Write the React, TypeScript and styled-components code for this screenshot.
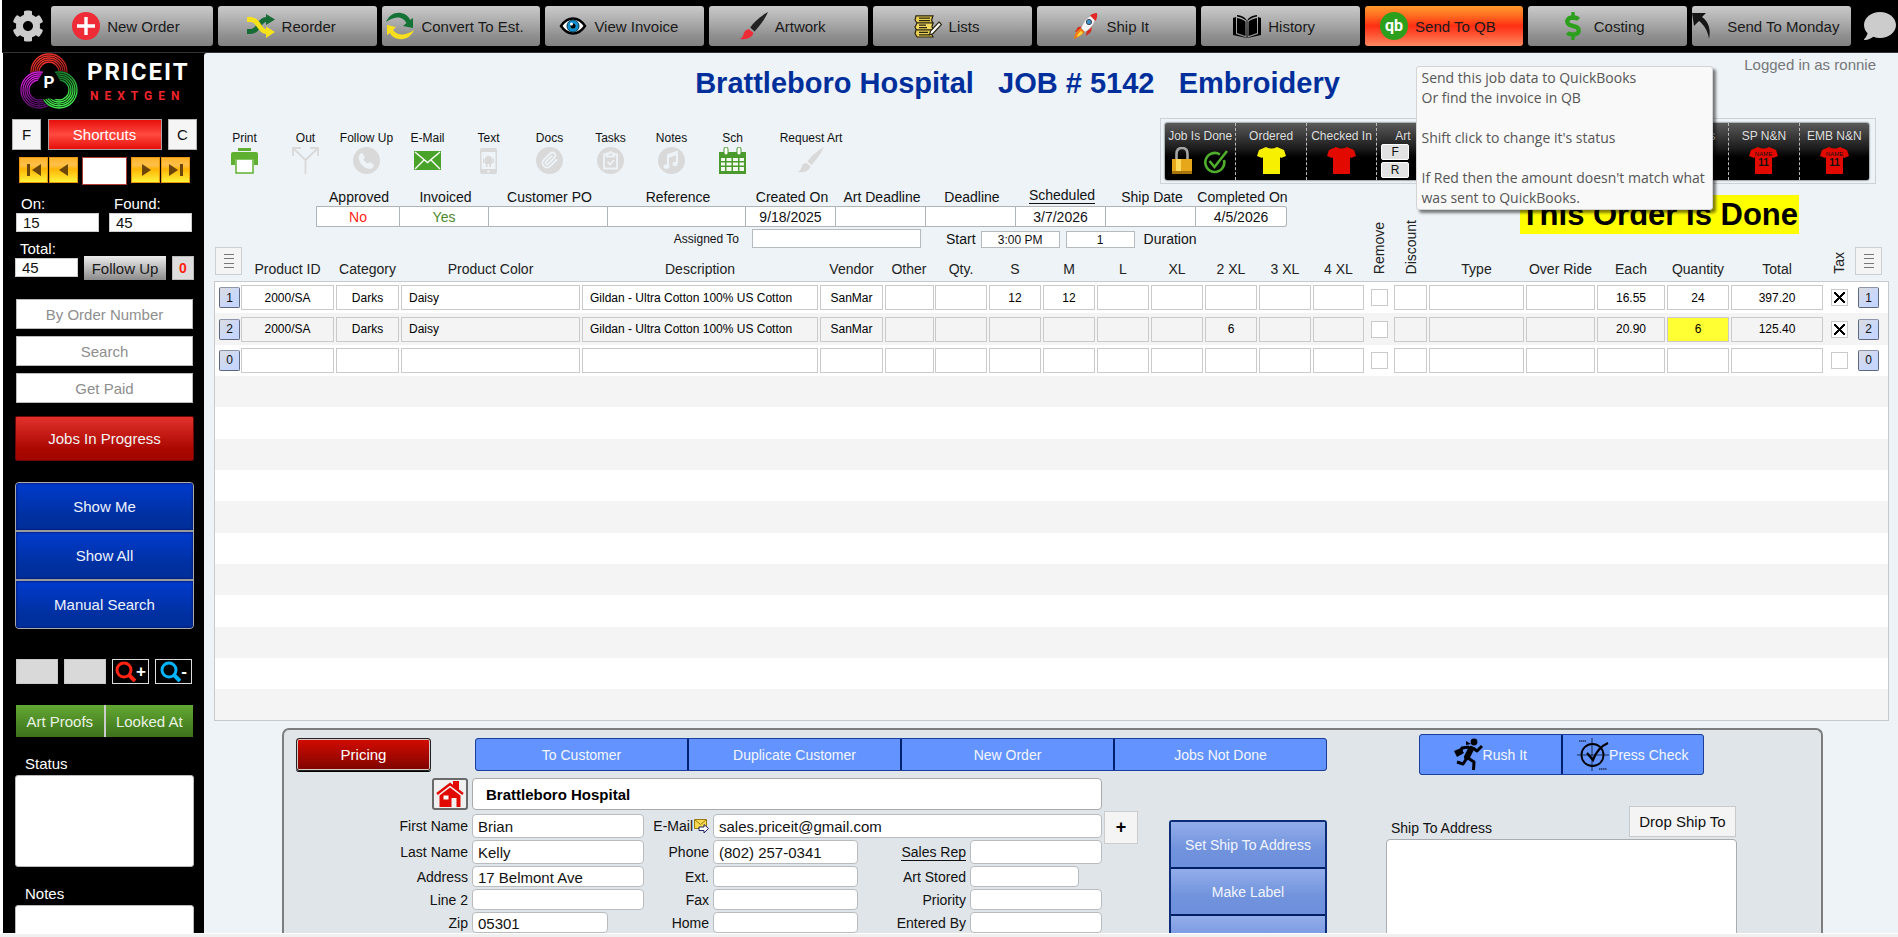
import React, { useId } from "react";
import styled, { createGlobalStyle, css } from "styled-components";
import { FaCog, FaComment, FaDollarSign } from "react-icons/fa";

const Global = createGlobalStyle`
  * { box-sizing: border-box; }
  body { margin: 0; background: #f0f0f0; font-family: "Liberation Sans", Arial, sans-serif; font-size: 14px; color: #111; }
  button, input, textarea { font-family: inherit; margin: 0; }
  button { cursor: pointer; padding: 0; }
  svg { display: block; flex: none; }
`;

/* ---------- shell ---------- */

const Shell = styled.div`
  height: 100vh;
  display: grid;
  grid-template-rows: 53px minmax(0, 1fr) 4px;
  background: #fff;
`;

const Footer = styled.footer`
  border-top: 1px solid #fff;
  background: #f0f0f0;
`;

const TopBar = styled.nav`
  margin-left: 2px;
  background: #000;
  border-bottom: 1px solid #333;
  padding: 6px 0 6px 1px;
  display: flex;
  gap: 5px;
`;

const IconButton = styled.button<{ $width: number }>`
  width: ${(p) => p.$width}px;
  padding-left: 7px;
  border: 0;
  background: none;
  color: #ccc;
  display: flex;
  align-items: center;
  justify-content: center;
`;

const TopSlot = styled.div`
  position: relative;
  flex: 1 1 0;
  min-width: 0;
  display: flex;
  &:nth-child(2) { flex-basis: 3px; }
`;

const TopButton = styled.button<{ $alert?: boolean }>`
  flex: 1;
  height: 40px;
  border: 0;
  border-radius: 3px;
  padding-right: 12px;
  display: flex;
  align-items: center;
  justify-content: center;
  gap: 7px;
  font-size: 15px;
  color: #1a1a1a;
  white-space: nowrap;
  background: ${(p) =>
    p.$alert
      ? "linear-gradient(#ff9a2e 0%, #ff6a20 25%, #ff2e14 50%, #ff5a38 75%, #ff8a62 100%)"
      : "linear-gradient(#cacaca 0%, #a8a8a8 45%, #8f8f8f 75%, #808080 100%)"};
`;

const Tooltip = styled.div`
  position: absolute;
  left: 51px;
  top: 60px;
  z-index: 10;
  width: 297px;
  padding: 1px 5px;
  border: 1px solid #d4d4d4;
  border-radius: 3px;
  background: #f9f9f9;
  box-shadow: 3px 3px 3px rgba(0, 0, 0, 0.5);
  font-family: "Open Sans", "Noto Sans", sans-serif;
  font-size: 14px;
  line-height: 20px;
  color: #555;
  white-space: pre;
`;

const TooltipBody = styled.p`
  margin: 0;
`;

const Body = styled.div`
  margin-left: 3px;
  min-height: 0;
  overflow: hidden;
  background: #000;
  display: grid;
  grid-template-columns: 201px minmax(0, 1fr);
`;

/* ---------- sidebar ---------- */

const Sidebar = styled.aside`
  padding: 0 10px 0 12px;
  color: #fff;
  display: flex;
  flex-direction: column;
`;

const Logo = styled.div`
  height: 56px;
  display: flex;
  align-items: center;
  gap: 8px;
  padding-left: 4px;
`;

const LogoWords = styled.div`
  font-family: Roboto, sans-serif;
  font-weight: 700;
  text-align: left;
`;

const LogoName = styled.div`
  font-size: 24px;
  line-height: 26px;
  letter-spacing: 2px;
`;

const LogoTag = styled.div`
  font-size: 12px;
  line-height: 16px;
  letter-spacing: 6px;
  padding-left: 3px;
  margin-top: 3px;
  color: #f0242c;
`;

const Row = styled.div<{ $top: number; $gap?: number; $left?: number; $right?: number }>`
  display: flex;
  margin-top: ${(p) => p.$top}px;
  gap: ${(p) => p.$gap ?? 0}px;
  padding-left: ${(p) => p.$left ?? 0}px;
  padding-right: ${(p) => p.$right ?? 0}px;
`;

const ShortcutRow = styled.div`
  margin: 10px -3px 0;
  display: flex;
  justify-content: space-between;
`;

const LetterButton = styled.button`
  width: 29px;
  height: 31px;
  border: 1px solid #b5b5b5;
  background: #f5f5f5;
  font-size: 15px;
  color: #111;
`;

const ShortcutsButton = styled.button`
  width: 114px;
  height: 31px;
  border: 1px solid #a9a2a2;
  background: linear-gradient(#e60f0b, #ff4a40 50%, #e60f0b);
  color: #fff;
  font-size: 15px;
`;

const NavButton = styled.button`
  width: 29px;
  height: 26px;
  border: 1px solid #e8960c;
  background: linear-gradient(#ffb52c 0%, #ffc04a 30%, #ffb404 46%, #fff23a 100%);
  color: #6b4608;
  display: flex;
  align-items: center;
  justify-content: center;
`;

const NavInput = styled.input`
  width: 45px;
  height: 28px;
  margin: 0 3px;
  border: 1px solid #b43a34;
  background: #fff;
`;

const Stat = styled.label<{ $width: number; $bottom?: number }>`
  width: ${(p) => p.$width}px;
  padding-bottom: ${(p) => p.$bottom ?? 0}px;
  display: flex;
  flex-direction: column;
  gap: 1px;
  font-size: 15px;
  line-height: 16px;
`;

const StatName = styled.span`
  padding-left: 5px;
`;

const StatInput = styled.input`
  width: 100%;
  height: 19px;
  border: 1px solid #ccc;
  padding: 0 6px;
  font-size: 15px;
  color: #111;
`;

const FollowButton = styled.button`
  width: 82px;
  height: 24px;
  align-self: flex-end;
  border: 0;
  background: linear-gradient(#ececec, #8b8b8b);
  font-size: 15px;
  color: #1a1a1a;
`;

const CountButton = styled.button`
  width: 22px;
  height: 24px;
  align-self: flex-end;
  border: 1px solid #bbb;
  background: #ddd;
  color: #ff2414;
  font-weight: 700;
  font-size: 14px;
`;

const Finder = styled.div`
  margin: 19px 1px 0;
  display: flex;
  flex-direction: column;
  gap: 7px;
`;

const FinderInput = styled.input`
  height: 30px;
  border: 1px solid #bbb;
  background: #fff;
  text-align: center;
  font-size: 15px;
  &::placeholder { color: #8e8e8e; opacity: 1; }
`;

const JobsButton = styled.button`
  margin-top: 13px;
  height: 45px;
  border: 1px solid #6d0806;
  border-radius: 2px;
  background: linear-gradient(#e2312b, #aa0700 75%, #a20500);
  color: #f2f2f2;
  font-size: 15px;
`;

const BlueStack = styled.div`
  margin-top: 21px;
  border: 1px solid #aaa;
  border-radius: 4px;
  overflow: hidden;
  display: flex;
  flex-direction: column;
  gap: 2px;
  background: #999;
`;

const BlueStackButton = styled.button`
  height: 47px;
  border: 0;
  background: linear-gradient(#003bce, #0030a0 70%, #002f9a);
  box-shadow: inset 0 0 2px 1px rgba(0, 20, 110, 0.6);
  color: #eef2ff;
  font-size: 15px;
`;

const Swatch = styled.button`
  width: 42px;
  height: 25px;
  border: 1px solid #c9c9c9;
  background: #d9d9d9;
`;

const ZoomButton = styled.button`
  width: 37px;
  height: 25px;
  border: 1px solid #ddd;
  background: #000;
  color: #fff;
  font-weight: 700;
  font-size: 17px;
  line-height: 20px;
  display: flex;
  align-items: center;
  justify-content: center;
`;

const GreenPair = styled.div`
  margin: 21px 1px 0;
  display: grid;
  grid-template-columns: 1fr 1fr;
  gap: 2px;
  background: #ccc;
`;

const GreenButton = styled.button`
  height: 32px;
  border: 0;
  background: linear-gradient(#62a832, #3d711c);
  color: #e9f2e2;
  font-size: 15px;
`;

const NoteBlock = styled.label`
  margin-top: 19px;
  display: flex;
  flex-direction: column;
  gap: 3px;
  font-size: 15px;
  line-height: 16px;
`;

const NoteName = styled.span`
  padding-left: 10px;
`;

const NoteArea = styled.textarea`
  height: 92px;
  border: 1px solid #bbb;
  border-radius: 3px;
  background: #fff;
  resize: none;
`;

/* ---------- main ---------- */

const Main = styled.main`
  min-width: 0;
  background: #edf3f7;
  border-top-left-radius: 3px;
  padding: 0 9px 0 10px;
  display: flex;
  flex-direction: column;
`;

const TitleRow = styled.header`
  height: 65px;
  flex: none;
  display: grid;
  grid-template-columns: 1fr auto 1fr;
`;

const Title = styled.h1`
  grid-column: 2;
  margin: 13px 68px 0 0;
  font-size: 29px;
  line-height: 34px;
  font-weight: 700;
  color: #002f9c;
  white-space: pre;
`;

const LoggedIn = styled.div`
  justify-self: end;
  margin: 3px 13px 0 0;
  font-size: 15px;
  line-height: 18px;
  color: #777;
`;

const ToolRow = styled.div`
  flex: none;
  display: flex;
  justify-content: space-between;
`;

const Tools = styled.div`
  padding-top: 12px;
  display: flex;
  align-items: flex-start;
`;

const Tool = styled.button<{ $width?: number }>`
  width: ${(p) => p.$width ?? 61}px;
  border: 0;
  background: none;
  display: flex;
  flex-direction: column;
  align-items: center;
  gap: 1px;
  font-size: 12px;
  line-height: 16px;
  color: #111;
  white-space: nowrap;
`;

const Band = styled.div`
  width: 716px;
  margin-right: 13px;
  padding: 4px 6px 3px 4px;
  border: 1px solid #cdd2d6;
  display: flex;
`;

const BandInner = styled.div`
  flex: 1;
  height: 57px;
  border-radius: 2px;
  background: linear-gradient(#5a5a5a, #1b1b1b 45%, #000 60%);
  box-shadow: 0 0 2px #000;
  display: grid;
  grid-template-columns: repeat(10, 1fr);
`;

const BandCell = styled.div<{ $start?: boolean }>`
  padding: 5px 0 0 ${(p) => (p.$start ? 4 : 0)}px;
  display: flex;
  flex-direction: column;
  align-items: ${(p) => (p.$start ? "flex-start" : "center")};
  gap: ${(p) => (p.$start ? 0 : 3)}px;
  font-size: 12px;
  line-height: 16px;
  color: #ddd;
  white-space: nowrap;
  & + & { border-left: 1px dashed #bbb; }
  & > span { padding-left: ${(p) => (p.$start ? 14 : 0)}px; }
`;

const BandIcons = styled.div`
  display: flex;
  gap: 12px;
`;

const SideButtons = styled.div`
  display: flex;
  flex-direction: column;
  gap: 2px;
`;

const SideButton = styled.button`
  width: 28px;
  height: 16px;
  border: 1px solid #fff;
  border-radius: 2px;
  background: #e2e2e2;
  font-size: 12px;
  line-height: 14px;
  color: #111;
`;

const InfoRow = styled.div`
  flex: none;
  height: 63px;
  padding-top: 4px;
  display: flex;
  justify-content: space-between;
  align-items: flex-start;
`;

const InfoFields = styled.div`
  margin-left: 102px;
  display: grid;
  grid-template-columns: 84px 89px 119px 138px repeat(5, 90px) 91px;
`;

const InfoField = styled.label`
  display: flex;
  flex-direction: column;
  align-items: center;
  font-size: 14px;
  line-height: 18px;
  white-space: nowrap;
`;

const InfoName = styled.span<{ $link?: boolean }>`
  margin-left: 2px;
  ${(p) => p.$link && css`line-height: 15px; border-bottom: 1px solid #111; margin-bottom: 2px;`}
`;

const InfoInput = styled.input<{ $color?: string; $first?: boolean; $last?: boolean }>`
  width: 100%;
  height: 21px;
  border: 1px solid #aeb4b8;
  border-left-width: ${(p) => (p.$first ? 1 : 0)}px;
  border-radius: ${(p) => (p.$last ? "0 3px 3px 0" : "0")};
  background: #fff;
  text-align: center;
  font-size: 14px;
  color: ${(p) => p.$color ?? "#111"};
`;

const Assign = styled.div`
  margin-top: 2px;
  display: flex;
  align-items: flex-end;
  line-height: 18px;
`;

const AssignName = styled.label<{ $width?: number; $small?: boolean; $left?: number; $right?: number }>`
  width: ${(p) => (p.$width ? `${p.$width}px` : "auto")};
  margin-left: ${(p) => p.$left ?? 0}px;
  margin-right: ${(p) => p.$right ?? 0}px;
  text-align: right;
  font-size: ${(p) => (p.$small ? 12 : 14)}px;
`;

const AssignInput = styled.input<{ $width: number; $height: number; $right?: number }>`
  width: ${(p) => p.$width}px;
  height: ${(p) => p.$height}px;
  margin-right: ${(p) => p.$right ?? 0}px;
  border: 1px solid #b4babe;
  background: #fff;
  text-align: center;
  font-size: 12px;
  color: #111;
`;

const Done = styled.strong`
  margin: 7px 90px 0 0;
  padding: 0 1px;
  background: #ff0;
  font-size: 31px;
  line-height: 39px;
  color: #000;
  white-space: nowrap;
`;

/* ---------- order lines ---------- */

const Lines = styled.table`
  flex: none;
  width: 100%;
  height: 474px;
  table-layout: fixed;
  border-collapse: separate;
  border-spacing: 0;
`;

const HeadCell = styled.th<{ $bottom?: number }>`
  height: 34px;
  padding: 0 0 ${(p) => p.$bottom ?? 3}px;
  border-bottom: 1px solid #c6cacd;
  vertical-align: bottom;
  font-size: 14px;
  line-height: 18px;
  font-weight: 400;
  color: #222;
  white-space: nowrap;
`;

const MenuButton = styled.button`
  width: 27px;
  height: 28px;
  margin-left: 1px;
  border: 1px solid #ccd0d2;
  background: #f4f4f4;
  display: flex;
  align-items: center;
  justify-content: center;
`;

const SideHead = styled.div`
  height: 20px;
  display: flex;
  justify-content: center;
  align-items: flex-end;
`;

const SideText = styled.span`
  writing-mode: vertical-rl;
  transform: rotate(180deg);
  line-height: 16px;
`;

const LineRow = styled.tr`
  height: 31px;
  background: #fff;
  &:nth-child(even) { background: #f4f4f4; }
  & > td:first-child { border-left: 1px solid #c6cacd; }
  & > td:last-child { border-right: 1px solid #c6cacd; }
  &:last-child > td { border-bottom: 1px solid #c6cacd; }
`;

const Cell = styled.td<{ $flush?: boolean }>`
  padding: 0 ${(p) => (p.$flush ? 0 : 1)}px 0 1px;
  vertical-align: middle;
  text-align: center;
`;

const CellInput = styled.input<{ $left?: boolean; $mark?: boolean }>`
  display: block;
  width: 100%;
  height: 25px;
  border: 1px solid #cacaca;
  padding: 0 ${(p) => (p.$left ? 7 : 0)}px;
  background: ${(p) => (p.$mark ? "#ffff33" : "transparent")};
  text-align: ${(p) => (p.$left ? "left" : "center")};
  font-size: 12px;
  color: #000;
`;

const LineButton = styled.button`
  display: block;
  width: 21px;
  height: 21px;
  margin-left: 3px;
  border: 1px solid #5d677f;
  border-top-color: #8d96aa;
  border-radius: 2px;
  background: linear-gradient(135deg, #dcdde0, #c9d7fa 60%, #c4d4fc);
  font-size: 12px;
  color: #111;
`;

const Tick = styled.input`
  appearance: none;
  display: block;
  width: 17px;
  height: 17px;
  margin: 0 auto;
  border: 1px solid #cacaca;
  background: #fff;
  &:checked {
    background:
      linear-gradient(45deg, transparent 42%, #000 43%, #000 57%, transparent 58%) center / 11px 11px no-repeat,
      linear-gradient(-45deg, transparent 42%, #000 43%, #000 57%, transparent 58%) center / 11px 11px no-repeat,
      #fff;
  }
`;

/* ---------- customer panel ---------- */

const Panel = styled.section`
  flex: 1 0 auto;
  margin: 7px 66px 0 68px;
  padding-top: 4px;
  border: 2px solid #7b7d7e;
  border-bottom: 0;
  border-radius: 7px 7px 0 0;
  background: #e0e5e9;
`;

const Actions = styled.div`
  display: flex;
  align-items: center;
  padding: 0 117px 0 12px;
`;

const PricingButton = styled.button`
  width: 135px;
  height: 33px;
  border: 1px solid #222;
  border-radius: 3px;
  background: linear-gradient(#d40b00, #7d0500);
  box-shadow: inset 0 0 0 1px #d8c9c7, 0 1px 0 #000;
  color: #fff;
  font-size: 15px;
`;

const Segment = styled.div<{ $left: number; $width?: number }>`
  flex: ${(p) => (p.$width ? `0 0 ${p.$width}px` : "1 1 0")};
  margin-left: ${(p) => p.$left}px;
  border: 1px solid #1c3f9c;
  border-radius: 3px;
  background: #00226e;
  overflow: hidden;
  display: flex;
  gap: 2px;
`;

const SegmentButton = styled.button<{ $height: number }>`
  flex: 1 1 0;
  height: ${(p) => p.$height}px;
  border: 0;
  background: #6293ff;
  color: #f4f7ff;
  font-size: 14px;
  display: flex;
  align-items: center;
  justify-content: center;
  white-space: nowrap;
`;

const Details = styled.div`
  padding-top: 3px;
  display: flex;
  align-items: flex-start;
`;

const FormColumn = styled.form`
  width: 818px;
  flex: none;
`;

const CompanyRow = styled.div`
  margin-bottom: 4px;
  padding-left: 148px;
  display: flex;
  gap: 4px;
`;

const HomeButton = styled.button`
  width: 36px;
  height: 32px;
  border: 2px solid #6a6a6a;
  border-radius: 3px;
  background: #f0f0f0;
  display: flex;
  align-items: center;
  justify-content: center;
`;

const CompanyInput = styled.input`
  flex: 1;
  min-width: 0;
  height: 32px;
  border: 1px solid #aaa;
  border-radius: 4px;
  padding: 0 13px;
  font-size: 15px;
  font-weight: 700;
  color: #000;
`;

const FormGrid = styled.div`
  display: grid;
  grid-template-columns: 184px 172px 61px 145px 104px 132px;
  grid-template-rows: 24px 24px 21px 21px 21px;
  gap: 2px 4px;
  align-items: stretch;
`;

const FormLabel = styled.label<{ $link?: boolean }>`
  display: flex;
  align-items: center;
  justify-content: flex-end;
  gap: 1px;
  font-size: 14px;
  line-height: 16px;
  white-space: nowrap;
  span { border-bottom: ${(p) => (p.$link ? "1px solid #111" : "0")}; }
`;

const FormInput = styled.input<{ $width?: number; $span?: number }>`
  grid-column: span ${(p) => p.$span ?? 1};
  width: ${(p) => (p.$width ? `${p.$width}px` : "100%")};
  min-width: 0;
  border: 1px solid #b9bcbe;
  border-radius: 4px;
  padding: 1px 5px 0;
  font-size: 15px;
  color: #111;
`;

const PlusButton = styled.button`
  width: 34px;
  height: 33px;
  margin: 33px 0 0 2px;
  border: 1px solid #ccc;
  background: #f4f4f4;
  font-size: 18px;
  font-weight: 700;
  color: #000;
`;

const ShipButtons = styled.div`
  flex: 0 0 158px;
  margin: 42px 0 0 31px;
  border: 2px solid #0d2c78;
  border-radius: 3px;
  background: #001f66;
  display: flex;
  flex-direction: column;
  gap: 2px;
`;

const ShipButton = styled.button`
  height: 45px;
  border: 0;
  background: linear-gradient(#93adea, #7193dd 60%, #6e90dc);
  color: #f1f5ff;
  font-size: 14px;
`;

const ShipTo = styled.div`
  flex: 0 0 351px;
  margin: 28px 0 0 59px;
`;

const ShipToHead = styled.div`
  height: 33px;
  padding: 0 1px 0 5px;
  display: flex;
  justify-content: space-between;
  align-items: flex-start;
`;

const ShipToName = styled.label`
  margin-top: 14px;
  font-size: 14px;
  line-height: 16px;
`;

const DropShip = styled.button`
  width: 107px;
  height: 31px;
  border: 1px solid #c9c9c9;
  background: #f4f4f4;
  font-size: 15px;
  color: #111;
`;

const ShipArea = styled.textarea`
  display: block;
  width: 100%;
  height: 130px;
  border: 1px solid #a9adb0;
  border-radius: 4px;
  background: #fff;
  resize: none;
`;

/* ---------- drawings ---------- */

const Emblem = () => {
  const radii = [18, 16, 14, 12, 10];
  const lobes = [
    { x: 29, y: 19, from: "#ff3a32", to: "#7a1010" },
    { x: 19, y: 37, from: "#e022e4", to: "#5a0f6c" },
    { x: 39, y: 37, from: "#12702a", to: "#46f050" },
  ];
  return (
    <svg width="60" height="56" viewBox="0 0 58 56" fill="none">
      <defs>
        {lobes.map((l, i) => (
          <linearGradient key={i} id={`lobe${i}`} x1="0" y1="0" x2="0.3" y2="1">
            <stop offset="0" stopColor={l.from} />
            <stop offset="1" stopColor={l.to} />
          </linearGradient>
        ))}
      </defs>
      {lobes.map((l, i) => (
        <g key={i} stroke={`url(#lobe${i})`} strokeWidth="1.300">
          <circle cx={l.x} cy={l.y} r="19" fill="#000" stroke="none" />
          {radii.map((r) => <circle key={r} cx={l.x} cy={l.y} r={r} />)}
        </g>
      ))}
      <path d="M29 15L43 38Q36 46 29 42Q22 46 15 38z" fill="#000" stroke="#000" strokeWidth="6" strokeLinejoin="round" />
      <text x="29" y="35" textAnchor="middle" fill="#fff" fontFamily="Roboto" fontWeight="700" fontSize="17">P</text>
    </svg>
  );
};

const PlusDisc = () => (
  <svg width="28" height="28" viewBox="0 0 28 28">
    <circle cx="14" cy="14" r="14" fill="#ee2b36" />
    <path d="M14 5v18M5 14h18" stroke="#fff" strokeWidth="3.4" />
  </svg>
);

const ShuffleIcon = () => (
  <svg width="28" height="24" viewBox="0 0 28 24" fill="none">
    <path d="M0 17.500h4c8 0 8-12 15-12h2" stroke="#176b35" strokeWidth="5" />
    <path d="M19 0l9 5.500l-9 5.500z" fill="#176b35" />
    <path d="M0 5.500h4c8 0 8 12 15 12h2" stroke="#f5e11c" strokeWidth="5" />
    <path d="M19 12.500l9 5.500l-9 6z" fill="#f5e11c" />
  </svg>
);

const ConvertIcon = () => (
  <svg width="28" height="28" viewBox="0 0 28 28">
    <path d="M0 10C3 3 9 0 15 1c5 .8 8 4 9 7l3-2l0 10l-10-2l3.500-3C19 8 15 5 11 5.500C6 6 3 8 0 10z" fill="#137337" />
    <path d="M28 18c-3 7-9 10-15 9c-5-.8-8-3-9-6l-3 2V13l9 2l-3 3c2 3 6 5 10 4.500c5-.500 8-2.500 11-4.500z" fill="#f7df1d" />
  </svg>
);

const EyeIcon = () => (
  <svg width="28" height="20" viewBox="0 0 28 20">
    <path d="M2 10C6 4 10 2.500 14 2.500S22 4 26 10C22 16 18 17.500 14 17.500S6 16 2 10z" fill="#fff" stroke="#000" strokeWidth="2.400" />
    <circle cx="14" cy="10" r="6" fill="#1590cf" stroke="#063850" />
    <circle cx="14" cy="10" r="2.500" fill="#000" />
    <circle cx="12.500" cy="8" r="1.500" fill="#fff" />
  </svg>
);

const BrushIcon = ({ handle, bristle, size = 26 }: { handle: string; bristle: string; size?: number }) => (
  <svg width={size} height={size} viewBox="0 0 26 26">
    <path d="M26 0C19 4 13 9 9.500 14.500l4 3.500C18 13 23 7 26 0z" fill={handle} />
    <path d="M8.500 16l4 3.500C11 24 6 26 0 25c2.500-1.500 3-3 3.500-5c.600-2.500 2.500-4 5-4z" fill={bristle} />
  </svg>
);

const ListsIcon = () => (
  <svg width="28" height="23" viewBox="0 0 28 23" stroke="#2a2510" strokeWidth="1.200">
    <path d="M2 .800h17l-1.500 4.500L19 8H3L1 5z" fill="#e8cf52" />
    <path d="M3 8h16l-1 3.500l1 3.500H2.500L1 12z" fill="#efd95f" />
    <path d="M2 15h17l-1.500 4l1.500 3H3l-2-3.500z" fill="#e8cf52" />
    <path d="M5 3.200h11M5 5.600h11M5 10.200h7M5 12.600h8M5 17.400h9M5 19.800h10" />
    <path d="M25 7l2.500 2.500l-8.500 9l-3.500 1.500l1-4z" fill="#fff" />
  </svg>
);

const RocketIcon = () => (
  <svg width="28" height="26" viewBox="0 0 28 26">
    <path d="M13 13l-7 1l-3 5l6-1zM15 16l-1 7l5-4l1-6z" fill="#d42c22" />
    <path d="M9 15C5 17 2 22 2 26c4-2 9-4 11-8z" fill="#f47b14" />
    <path d="M9 18c-2 1-4 4-4 6c2-1 4-2 6-4z" fill="#ffd83b" />
    <path d="M24 1c-7 1-12 6-15 14l4 4C20 15 24 9 24 1z" fill="#f4f4f4" stroke="#999" strokeWidth=".5" />
    <path d="M25 0c-3 .200-5 1-7 2.500l5.500 5.500C25 5.500 25.500 3 25 0z" fill="#e32626" />
    <circle cx="17" cy="9" r="2.600" fill="#3a93c8" stroke="#445" />
  </svg>
);

const BookIcon = () => (
  <svg width="28" height="24" viewBox="0 0 28 24">
    <path d="M0 4l3-1v17l10 3.500V6.500C10 4 7 3 4 2.500V1c4 .500 8 2 9.500 5v18L0 21z" fill="#000" />
    <path d="M28 4l-3-1v17l-10 3.500V6.500C18 4 21 3 24 2.500V1c-4 .500-8 2-9.500 5v18L28 21z" fill="#000" />
    <path d="M4 4c3 .500 6 1.500 8.500 3.500v14.500L4 19zM24 4c-3 .500-6 1.500-8.500 3.500v14.500L24 19z" fill="#000" />
  </svg>
);

const QbIcon = () => (
  <svg width="28" height="28" viewBox="0 0 28 28">
    <circle cx="14" cy="14" r="14" fill="#2ca01c" />
    <text x="14" y="19" textAnchor="middle" fill="#fff" fontFamily="Roboto" fontWeight="700" fontSize="16">qb</text>
  </svg>
);

const DollarIcon = styled(FaDollarSign)`
  width: 28px;
  height: 28px;
  color: #2ca01c;
`;

const BackArrow = () => (
  <svg width="28" height="28" viewBox="0 0 28 28">
    <path d="M0 1l14 0l-4 4c7 5 9 13 7 22C16 19 12 13 7 9l-5 5z" fill="#151515" />
  </svg>
);

const NavGlyph = ({ back, end }: { back?: boolean; end?: boolean }) => (
  <svg width="16" height="14" viewBox="0 0 16 14" fill="currentColor">
    <g transform={back ? "rotate(180 8 7)" : undefined}>
      <path d={end ? "M1 1l9 6l-9 6zM12 1h3v12h-3z" : "M4 1l9 6l-9 6z"} />
    </g>
  </svg>
);

const Loupe = ({ color }: { color: string }) => (
  <svg width="21" height="21" viewBox="0 0 21 21" fill="none" stroke={color}>
    <circle cx="9" cy="9" r="7" strokeWidth="3" />
    <path d="M14 14l6 6" strokeWidth="4" />
  </svg>
);

const GREY = "#d9d9d9";
const PAPER = "#edf3f7";

const toolIcons: Record<string, React.ReactNode> = {
  Print: (
    <svg width="27" height="27" viewBox="0 0 27 27">
      <path d="M7 1h13v3H7z" fill="#5fb030" />
      <path d="M2 5h23q2 0 2 2v11h-4v-6H4v6H0V7q0-2 2-2z" fill="#5fb030" />
      <path d="M5 12h17v14H5z" fill="#fff" stroke="#5fb030" strokeWidth="1.500" />
    </svg>
  ),
  Out: (
    <svg width="27" height="27" viewBox="0 0 27 27" fill="none" stroke={GREY} strokeWidth="1.800">
      <path d="M13.500 27V13L2 2M13.500 13L25 2M1 9V1h8M18 1h8v8" />
    </svg>
  ),
  "Follow Up": (
    <svg width="27" height="27" viewBox="0 0 27 27">
      <circle cx="13.500" cy="13.500" r="13.500" fill={GREY} />
      <path d="M9 6l3 4l-1.500 2.500q1.200 2.500 4 4L17 15l4 3q-1 4-4 4Q12 21.500 8.500 17.500T6 9q1-3 3-3z" fill={PAPER} />
    </svg>
  ),
  "E-Mail": (
    <svg width="27" height="27" viewBox="0 0 27 27">
      <path d="M0 4h27v19H0z" fill="#49a32a" />
      <path d="M1 5l12.500 10.500L26 5M1 22l9-9M26 22l-9-9" fill="none" stroke="#fff" strokeWidth="1.400" />
    </svg>
  ),
  Text: (
    <svg width="27" height="27" viewBox="0 0 27 27">
      <rect x="5" y="1" width="17" height="26" rx="2" fill={GREY} />
      <path d="M6.500 5h14v17h-14z" fill={PAPER} />
      <path d="M10 11q3.500-4.500 7 0v6h-7zM8 11.500h1.500V16H8zM17.500 11.500H19V16h-1.500zM11 17h1.500v3H11zM14.500 17H16v3h-1.500z" fill={GREY} />
      <circle cx="13.500" cy="24.500" r="1.200" fill={PAPER} />
    </svg>
  ),
  Docs: (
    <svg width="27" height="27" viewBox="0 0 27 27">
      <circle cx="13.500" cy="13.500" r="13.500" fill={GREY} />
      <path
        transform="translate(5 4) scale(.75)"
        d="M21.440 11.050l-9.190 9.190a6 6 0 0 1-8.490-8.490l8.570-8.570A4 4 0 1 1 18 8.840l-8.590 8.570a2 2 0 0 1-2.830-2.830l8.490-8.480"
        fill="none" stroke={PAPER} strokeWidth="2.400"
      />
    </svg>
  ),
  Tasks: (
    <svg width="27" height="27" viewBox="0 0 27 27" fill="none" stroke={PAPER} strokeWidth="1.800">
      <circle cx="13.500" cy="13.500" r="13.500" fill={GREY} stroke="none" />
      <path d="M10 7.500H7v14h13v-14h-3M10 9.500v-3h2q1.500-3 3 0h2v3zM10.500 15l2.500 2.500l4-4.500" />
    </svg>
  ),
  Notes: (
    <svg width="27" height="27" viewBox="0 0 27 27">
      <circle cx="13.500" cy="13.500" r="13.500" fill={GREY} />
      <path d="M10 19V8l9-3v11" fill="none" stroke={PAPER} strokeWidth="2" />
      <path d="M10 8l9-3v3l-9 3z" fill={PAPER} />
      <ellipse cx="8.500" cy="19.500" rx="3" ry="2.300" fill={PAPER} />
      <ellipse cx="17" cy="17" rx="2.600" ry="2.200" fill={PAPER} />
    </svg>
  ),
  Sch: (
    <svg width="27" height="27" viewBox="0 0 27 27">
      <path d="M0 5h27v22H0z" fill="#4b9a2e" />
      <path d="M2 11h4v3H2zM7.500 11h5v3h-5zM14 11h5v3h-5zM20.500 11H25v3h-4.500zM2 15.500h4v3H2zM7.500 15.500h5v3h-5zM14 15.500h5v3h-5zM20.500 15.500H25v3h-4.500zM2 20h4v4H2zM7.500 20h5v4h-5zM14 20h5v4h-5zM20.500 20H25v4h-4.500z" fill="#f4faf0" />
      <rect x="5" y="0" width="4" height="8" rx="2" fill="#fff" stroke="#4b9a2e" />
      <rect x="18" y="0" width="4" height="8" rx="2" fill="#fff" stroke="#4b9a2e" />
    </svg>
  ),
  "Request Art": <BrushIcon handle={GREY} bristle={GREY} />,
};

const Shirt = ({ color, named }: { color: string; named?: boolean }) => (
  <svg width="29" height="27" viewBox="0 0 29 27">
    <path d="M9 0q5.500 3 11 0l7 3l2 6l-5 2l-1-1v17H6V10l-1 1l-5-2l2-6z" fill={color} />
    {named && (
      <g fill="#111" textAnchor="middle" fontFamily="Liberation Sans">
        <text x="14.500" y="9" fontSize="6">NAME</text>
        <text x="14.500" y="19" fontSize="10" fontWeight="700">11</text>
      </g>
    )}
  </svg>
);

const Padlock = () => (
  <svg width="20" height="27" viewBox="0 0 20 27">
    <path d="M4.500 13V7q0-6 5.500-6t5.500 6v6" fill="none" stroke="#a5a5a5" strokeWidth="2.600" />
    <path d="M0 12h20v15H0z" fill="#e6a81a" />
    <path d="M4 12h5v15H4z" fill="#ffd95a" />
    <path d="M0 24h20v3H0z" fill="#a8740c" />
  </svg>
);

const DoneCheck = () => (
  <svg width="24" height="27" viewBox="0 0 24 27" fill="none" stroke="#4fae2c">
    <path d="M16 7.500A9.500 9.500 0 1 0 20 13" strokeWidth="2.600" />
    <path d="M5.500 14l5 6L23 4" strokeWidth="2.600" />
  </svg>
);

const MenuGlyph = () => (
  <svg width="10" height="16" viewBox="0 0 10 16" stroke="#777">
    <path d="M0 1.500h10M0 5.500h10M0 10.500h10M0 14.500h10" />
  </svg>
);

const House = () => (
  <svg width="28" height="26" viewBox="0 0 28 26">
    <path d="M1 13L14 3l13 10" fill="none" stroke="#e20a00" strokeWidth="2.400" />
    <path d="M17 0h6v9l-6-4.500zM3.500 14.500L14 6.500l10.500 8V26h-4v-9h-5v9H3.500z" fill="#e20a00" />
    <path d="M7.500 14.500h5v4h-5z" fill="#fff" />
  </svg>
);

const MailGo = () => (
  <svg width="15" height="16" viewBox="0 0 15 16">
    <path d="M.500 1.500h12v9H.500z" fill="#f5d94e" stroke="#9a7a10" />
    <path d="M1 2l5.500 4.500L12 2" fill="none" stroke="#9a7a10" />
    <path d="M5 9h5V6.500l4.500 4L10 15v-2.500H5z" fill="#fff" stroke="#23235e" />
  </svg>
);

const Runner = () => (
  <svg width="29" height="33" viewBox="0 0 29 33" fill="none" stroke="#000">
    <circle cx="20" cy="4" r="3.400" fill="#000" stroke="none" />
    <path d="M17 11l-4 8" strokeWidth="6" strokeLinecap="round" />
    <path d="M19 10l4 3l5-5M15 9l-7 1l-2 6M14 20l6 4l-.500 8M13 20l-4 6l-6-2" strokeWidth="3" strokeLinejoin="round" />
    <path d="M0 13l7-3l3 5l-7 4zM12 3l5 3l-5 1z" fill="#000" stroke="none" />
  </svg>
);

const PressMark = () => (
  <svg width="32" height="33" viewBox="0 0 32 33" fill="none" stroke="#000">
    <path d="M15 0v33M0 17h32" strokeWidth=".700" />
    <circle cx="15.500" cy="17" r="11" strokeWidth="1.800" />
    <path d="M10 15l6 7C19 14 24 8 31 5" strokeWidth="2.200" />
    <path d="M2 3h7M22 31h8" strokeWidth="1" strokeDasharray="1.500 .500" />
  </svg>
);

/* ---------- content ---------- */

const topButtons: { label: string; icon: React.ReactNode; tip?: string[] }[] = [
  { label: "New Order", icon: <PlusDisc /> },
  { label: "Reorder", icon: <ShuffleIcon /> },
  { label: "Convert To Est.", icon: <ConvertIcon /> },
  { label: "View Invoice", icon: <EyeIcon /> },
  { label: "Artwork", icon: <BrushIcon handle="#222" bristle="#ee2b36" size={28} /> },
  { label: "Lists", icon: <ListsIcon /> },
  { label: "Ship It", icon: <RocketIcon /> },
  { label: "History", icon: <BookIcon /> },
  {
    label: "Send To QB",
    icon: <QbIcon />,
    tip: [
      "Send this job data to QuickBooks",
      "Or find the invoice in QB",
      "",
      "Shift click to change it's status",
      "",
      "If Red then the amount doesn't match what",
      "was sent to QuickBooks.",
    ],
  },
  { label: "Costing", icon: <DollarIcon /> },
  { label: "Send To Monday", icon: <BackArrow /> },
];

const infoFields: { name: string; value?: string; color?: string; link?: boolean }[] = [
  { name: "Approved", value: "No", color: "#ff2414" },
  { name: "Invoiced", value: "Yes", color: "#4a8a2c" },
  { name: "Customer PO" },
  { name: "Reference" },
  { name: "Created On", value: "9/18/2025" },
  { name: "Art Deadline" },
  { name: "Deadline" },
  { name: "Scheduled", value: "3/7/2026", link: true },
  { name: "Ship Date" },
  { name: "Completed On", value: "4/5/2026" },
];

type Kind = "line" | "text" | "left" | "tick" | "side";
const columns: { name: string; width: number; kind: Kind }[] = [
  { name: "", width: 26, kind: "line" },
  { name: "Product ID", width: 95, kind: "text" },
  { name: "Category", width: 65, kind: "text" },
  { name: "Product Color", width: 181, kind: "left" },
  { name: "Description", width: 238, kind: "left" },
  { name: "Vendor", width: 65, kind: "text" },
  { name: "Other", width: 50, kind: "text" },
  { name: "Qty.", width: 54, kind: "text" },
  { name: "S", width: 54, kind: "text" },
  { name: "M", width: 54, kind: "text" },
  { name: "L", width: 54, kind: "text" },
  { name: "XL", width: 54, kind: "text" },
  { name: "2 XL", width: 54, kind: "text" },
  { name: "3 XL", width: 54, kind: "text" },
  { name: "4 XL", width: 53, kind: "text" },
  { name: "Remove", width: 28, kind: "tick" },
  { name: "Discount", width: 35, kind: "side" },
  { name: "Type", width: 97, kind: "text" },
  { name: "Over Ride", width: 71, kind: "text" },
  { name: "Each", width: 70, kind: "text" },
  { name: "Quantity", width: 64, kind: "text" },
  { name: "Total", width: 94, kind: "text" },
  { name: "Tax", width: 30, kind: "tick" },
  { name: "", width: 35, kind: "line" },
];

const product = {
  "Product ID": "2000/SA",
  Category: "Darks",
  "Product Color": "Daisy",
  Description: "Gildan - Ultra Cotton 100% US Cotton",
  Vendor: "SanMar",
  Tax: "x",
};
const lines: { no: string; mark?: string; values: Record<string, string> }[] = [
  { no: "1", values: { ...product, S: "12", M: "12", Each: "16.55", Quantity: "24", Total: "397.20" } },
  { no: "2", mark: "Quantity", values: { ...product, "2 XL": "6", Each: "20.90", Quantity: "6", Total: "125.40" } },
  { no: "0", values: {} },
];
const blankRows = 11;

const band: { name: string; body?: React.ReactNode; start?: boolean }[] = [
  { name: "Job Is Done", body: <BandIcons><Padlock /><DoneCheck /></BandIcons> },
  { name: "Ordered", body: <Shirt color="#f7f000" /> },
  { name: "Checked In", body: <Shirt color="#e20a00" /> },
  { name: "Art", start: true, body: <SideButtons><SideButton>F</SideButton><SideButton>R</SideButton></SideButtons> },
  { name: "" },
  { name: "" },
  { name: "" },
  { name: "Screens" },
  { name: "SP N&N", body: <Shirt color="#e20a00" named /> },
  { name: "EMB N&N", body: <Shirt color="#e20a00" named /> },
];

const Field = ({ name, value, width, span, link, icon }: {
  name: string; value?: string; width?: number; span?: number; link?: boolean; icon?: React.ReactNode;
}) => {
  const id = useId();
  return (
    <>
      <FormLabel htmlFor={id} $link={link}><span>{name}</span>{icon}</FormLabel>
      <FormInput id={id} defaultValue={value} $width={width} $span={span} />
    </>
  );
};

const OrderLines = () => (
  <Lines>
    <colgroup>
      {columns.map((c, i) => <col key={i} width={c.width} />)}
    </colgroup>
    <thead>
      <tr>
        {columns.map((c, i) => {
          if (c.kind === "line")
            return <HeadCell key={i} $bottom={6}><MenuButton aria-label="Columns"><MenuGlyph /></MenuButton></HeadCell>;
          if (c.kind === "tick" || c.kind === "side")
            return (
              <HeadCell key={i} $bottom={7}>
                <SideHead><SideText>{c.name}</SideText></SideHead>
              </HeadCell>
            );
          return <HeadCell key={i}>{c.name}</HeadCell>;
        })}
      </tr>
    </thead>
    <tbody>
      {lines.map((line) => (
        <LineRow key={line.no}>
          {columns.map((c, i) => (
            <Cell key={i} $flush={c.name === "Other"}>
              {c.kind === "line" && <LineButton>{line.no}</LineButton>}
              {c.kind === "tick" && <Tick type="checkbox" aria-label={c.name} defaultChecked={!!line.values[c.name]} />}
              {(c.kind === "text" || c.kind === "left" || c.kind === "side") && (
                <CellInput
                  aria-label={c.name}
                  defaultValue={line.values[c.name] ?? ""}
                  $left={c.kind === "left"}
                  $mark={line.mark === c.name}
                />
              )}
            </Cell>
          ))}
        </LineRow>
      ))}
      {Array.from({ length: blankRows }, (_, r) => (
        <LineRow key={r}><Cell colSpan={columns.length} /></LineRow>
      ))}
    </tbody>
  </Lines>
);

const CustomerPanel = () => (
  <Panel>
    <Actions>
      <PricingButton>Pricing</PricingButton>
      <Segment $left={44}>
        {["To Customer", "Duplicate Customer", "New Order", "Jobs Not Done"].map((t) => (
          <SegmentButton key={t} $height={31}>{t}</SegmentButton>
        ))}
      </Segment>
      <Segment $left={92} $width={285}>
        <SegmentButton $height={39}><Runner />Rush It</SegmentButton>
        <SegmentButton $height={39}><PressMark />Press Check</SegmentButton>
      </Segment>
    </Actions>
    <Details>
      <FormColumn>
        <CompanyRow>
          <HomeButton type="button" aria-label="Customer home"><House /></HomeButton>
          <CompanyInput aria-label="Company" defaultValue="Brattleboro Hospital" />
        </CompanyRow>
        <FormGrid>
          <Field name="First Name" value="Brian" />
          <Field name="E-Mail" value="sales.priceit@gmail.com" span={3} icon={<MailGo />} />
          <Field name="Last Name" value="Kelly" />
          <Field name="Phone" value="(802) 257-0341" />
          <Field name="Sales Rep" link />
          <Field name="Address" value="17 Belmont Ave" />
          <Field name="Ext." />
          <Field name="Art Stored" width={109} />
          <Field name="Line 2" />
          <Field name="Fax" />
          <Field name="Priority" />
          <Field name="Zip" value="05301" width={136} />
          <Field name="Home" />
          <Field name="Entered By" />
        </FormGrid>
      </FormColumn>
      <PlusButton aria-label="Add e-mail">+</PlusButton>
      <ShipButtons>
        <ShipButton>Set Ship To Address</ShipButton>
        <ShipButton>Make Label</ShipButton>
        <ShipButton aria-label="More shipping" />
      </ShipButtons>
      <ShipTo>
        <ShipToHead>
          <ShipToName htmlFor="shipTo">Ship To Address</ShipToName>
          <DropShip>Drop Ship To</DropShip>
        </ShipToHead>
        <ShipArea id="shipTo" />
      </ShipTo>
    </Details>
  </Panel>
);

export default function App() {
  return (
    <Shell>
      <Global />
      <TopBar>
        <IconButton $width={43} aria-label="Settings"><FaCog size={32} /></IconButton>
        {topButtons.map((b) => (
          <TopSlot key={b.label}>
            <TopButton $alert={!!b.tip}>{b.icon}{b.label}</TopButton>
            {b.tip && (
              <Tooltip role="tooltip"><TooltipBody>{b.tip.join("\n")}</TooltipBody></Tooltip>
            )}
          </TopSlot>
        ))}
        <IconButton $width={42} aria-label="Chat"><FaComment size={32} /></IconButton>
      </TopBar>

      <Body>
        <Sidebar>
          <Logo>
            <Emblem />
            <LogoWords>
              <LogoName>PRICEIT</LogoName>
              <LogoTag>NEXTGEN</LogoTag>
            </LogoWords>
          </Logo>
          <ShortcutRow>
            <LetterButton>F</LetterButton>
            <ShortcutsButton>Shortcuts</ShortcutsButton>
            <LetterButton>C</LetterButton>
          </ShortcutRow>
          <Row $top={7} $left={4} $gap={1}>
            <NavButton aria-label="First"><NavGlyph back end /></NavButton>
            <NavButton aria-label="Previous"><NavGlyph back /></NavButton>
            <NavInput aria-label="Record" />
            <NavButton aria-label="Next"><NavGlyph /></NavButton>
            <NavButton aria-label="Last"><NavGlyph end /></NavButton>
          </Row>
          <Row $top={11} $left={1} $gap={10}>
            <Stat $width={83}><StatName>On:</StatName><StatInput defaultValue="15" /></Stat>
            <Stat $width={83}><StatName>Found:</StatName><StatInput defaultValue="45" /></Stat>
          </Row>
          <Row $top={9} $gap={6}>
            <Stat $width={63} $bottom={3}><StatName>Total:</StatName><StatInput defaultValue="45" /></Stat>
            <FollowButton>Follow Up</FollowButton>
            <CountButton>0</CountButton>
          </Row>
          <Finder>
            <FinderInput aria-label="By Order Number" placeholder="By Order Number" />
            <FinderInput aria-label="Search" placeholder="Search" />
            <FinderInput aria-label="Get Paid" placeholder="Get Paid" />
          </Finder>
          <JobsButton>Jobs In Progress</JobsButton>
          <BlueStack>
            {["Show Me", "Show All", "Manual Search"].map((t) => (
              <BlueStackButton key={t}>{t}</BlueStackButton>
            ))}
          </BlueStack>
          <Row $top={30} $left={1} $gap={6}>
            <Swatch aria-label="Slot one" />
            <Swatch aria-label="Slot two" />
            <ZoomButton aria-label="Zoom in"><Loupe color="#ff2414" />+</ZoomButton>
            <ZoomButton aria-label="Zoom out"><Loupe color="#00b4ff" />-</ZoomButton>
          </Row>
          <GreenPair>
            <GreenButton>Art Proofs</GreenButton>
            <GreenButton>Looked At</GreenButton>
          </GreenPair>
          <NoteBlock><NoteName>Status</NoteName><NoteArea /></NoteBlock>
          <NoteBlock><NoteName>Notes</NoteName><NoteArea /></NoteBlock>
        </Sidebar>

        <Main>
          <TitleRow>
            <Title>{"Brattleboro Hospital   JOB # 5142   Embroidery"}</Title>
            <LoggedIn>Logged in as ronnie</LoggedIn>
          </TitleRow>
          <ToolRow>
            <Tools>
              {Object.entries(toolIcons).map(([name, icon]) => (
                <Tool key={name} $width={name === "Request Art" ? 96 : 61}>{name}{icon}</Tool>
              ))}
            </Tools>
            <Band>
              <BandInner>
                {band.map((cell, i) => (
                  <BandCell key={i} $start={cell.start}><span>{cell.name}</span>{cell.body}</BandCell>
                ))}
              </BandInner>
            </Band>
          </ToolRow>
          <InfoRow>
            <div>
              <InfoFields>
                {infoFields.map((f, i) => (
                  <InfoField key={f.name}>
                    <InfoName $link={f.link}>{f.name}</InfoName>
                    <InfoInput
                      defaultValue={f.value}
                      $color={f.color}
                      $first={i === 0}
                      $last={i === infoFields.length - 1}
                    />
                  </InfoField>
                ))}
              </InfoFields>
              <Assign>
                <AssignName htmlFor="assigned" $width={525} $small $right={13}>Assigned To</AssignName>
                <AssignInput id="assigned" $width={169} $height={19} $right={25} />
                <AssignName htmlFor="start" $right={5}>Start</AssignName>
                <AssignInput id="start" $width={79} $height={17} $right={6} defaultValue="3:00 PM" />
                <AssignInput id="duration" $width={69} $height={17} $right={9} defaultValue="1" />
                <AssignName htmlFor="duration">Duration</AssignName>
              </Assign>
            </div>
            <Done>This Order Is Done</Done>
          </InfoRow>
          <OrderLines />
          <CustomerPanel />
        </Main>
      </Body>
      <Footer />
    </Shell>
  );
}
